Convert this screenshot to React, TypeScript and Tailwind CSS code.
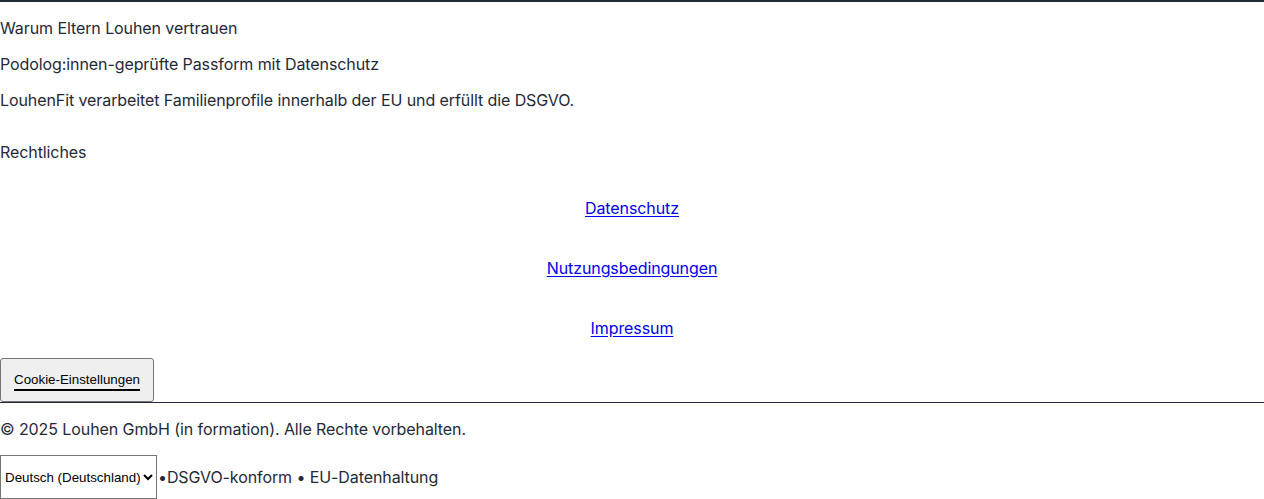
import React from 'react'

const trustLines = [
    'Warum Eltern Louhen vertrauen',
    'Podolog:innen-geprüfte Passform mit Datenschutz',
    'LouhenFit verarbeitet Familienprofile innerhalb der EU und erfüllt die DSGVO.',
]

const legalLinks = ['Datenschutz', 'Nutzungsbedingungen', 'Impressum']

const App: React.FC = () => {
    return (
        <footer className="border-t-2 border-[#1f2937] text-[#1f2937] font-['Inter',sans-serif] text-base leading-6 tracking-[-0.09px] bg-white">
            <div className="pt-[14px] flex flex-col gap-3">
                {trustLines.map((line) => (
                    <p key={line}>{line}</p>
                ))}
            </div>

            <div className="mt-7">
                <p>Rechtliches</p>
                <ul className="mt-8 flex flex-col gap-9 text-center">
                    {legalLinks.map((link) => (
                        <li key={link}>
                            <a href="#" className="text-[#0000ee] underline underline-offset-2">{link}</a>
                        </li>
                    ))}
                </ul>
            </div>

            <button className="mt-[18px] h-[44px] w-[154px] rounded-[3px] border border-[#767676] bg-[#efefef] text-[13.33px] tracking-normal text-black font-['Liberation_Sans',Arial,sans-serif]">
                <span className="underline decoration-2 underline-offset-[5px]">Cookie-Einstellungen</span>
            </button>

            <div className="border-t border-[#1f2937]">
                <p className="mt-[14px]">© 2025 Louhen GmbH (in formation). Alle Rechte vorbehalten.</p>
                <div className="mt-[14px] flex items-center">
                    <select className="h-[44px] w-[157px] border border-[#767676] bg-white text-[13.33px] tracking-normal text-black font-['Liberation_Sans',Arial,sans-serif]">
                        <option>Deutsch (Deutschland)</option>
                        <option>English (UK)</option>
                    </select>
                    <span className="ml-px">•DSGVO-konform • EU-Datenhaltung</span>
                </div>
            </div>
        </footer>
    )
}

export default App
